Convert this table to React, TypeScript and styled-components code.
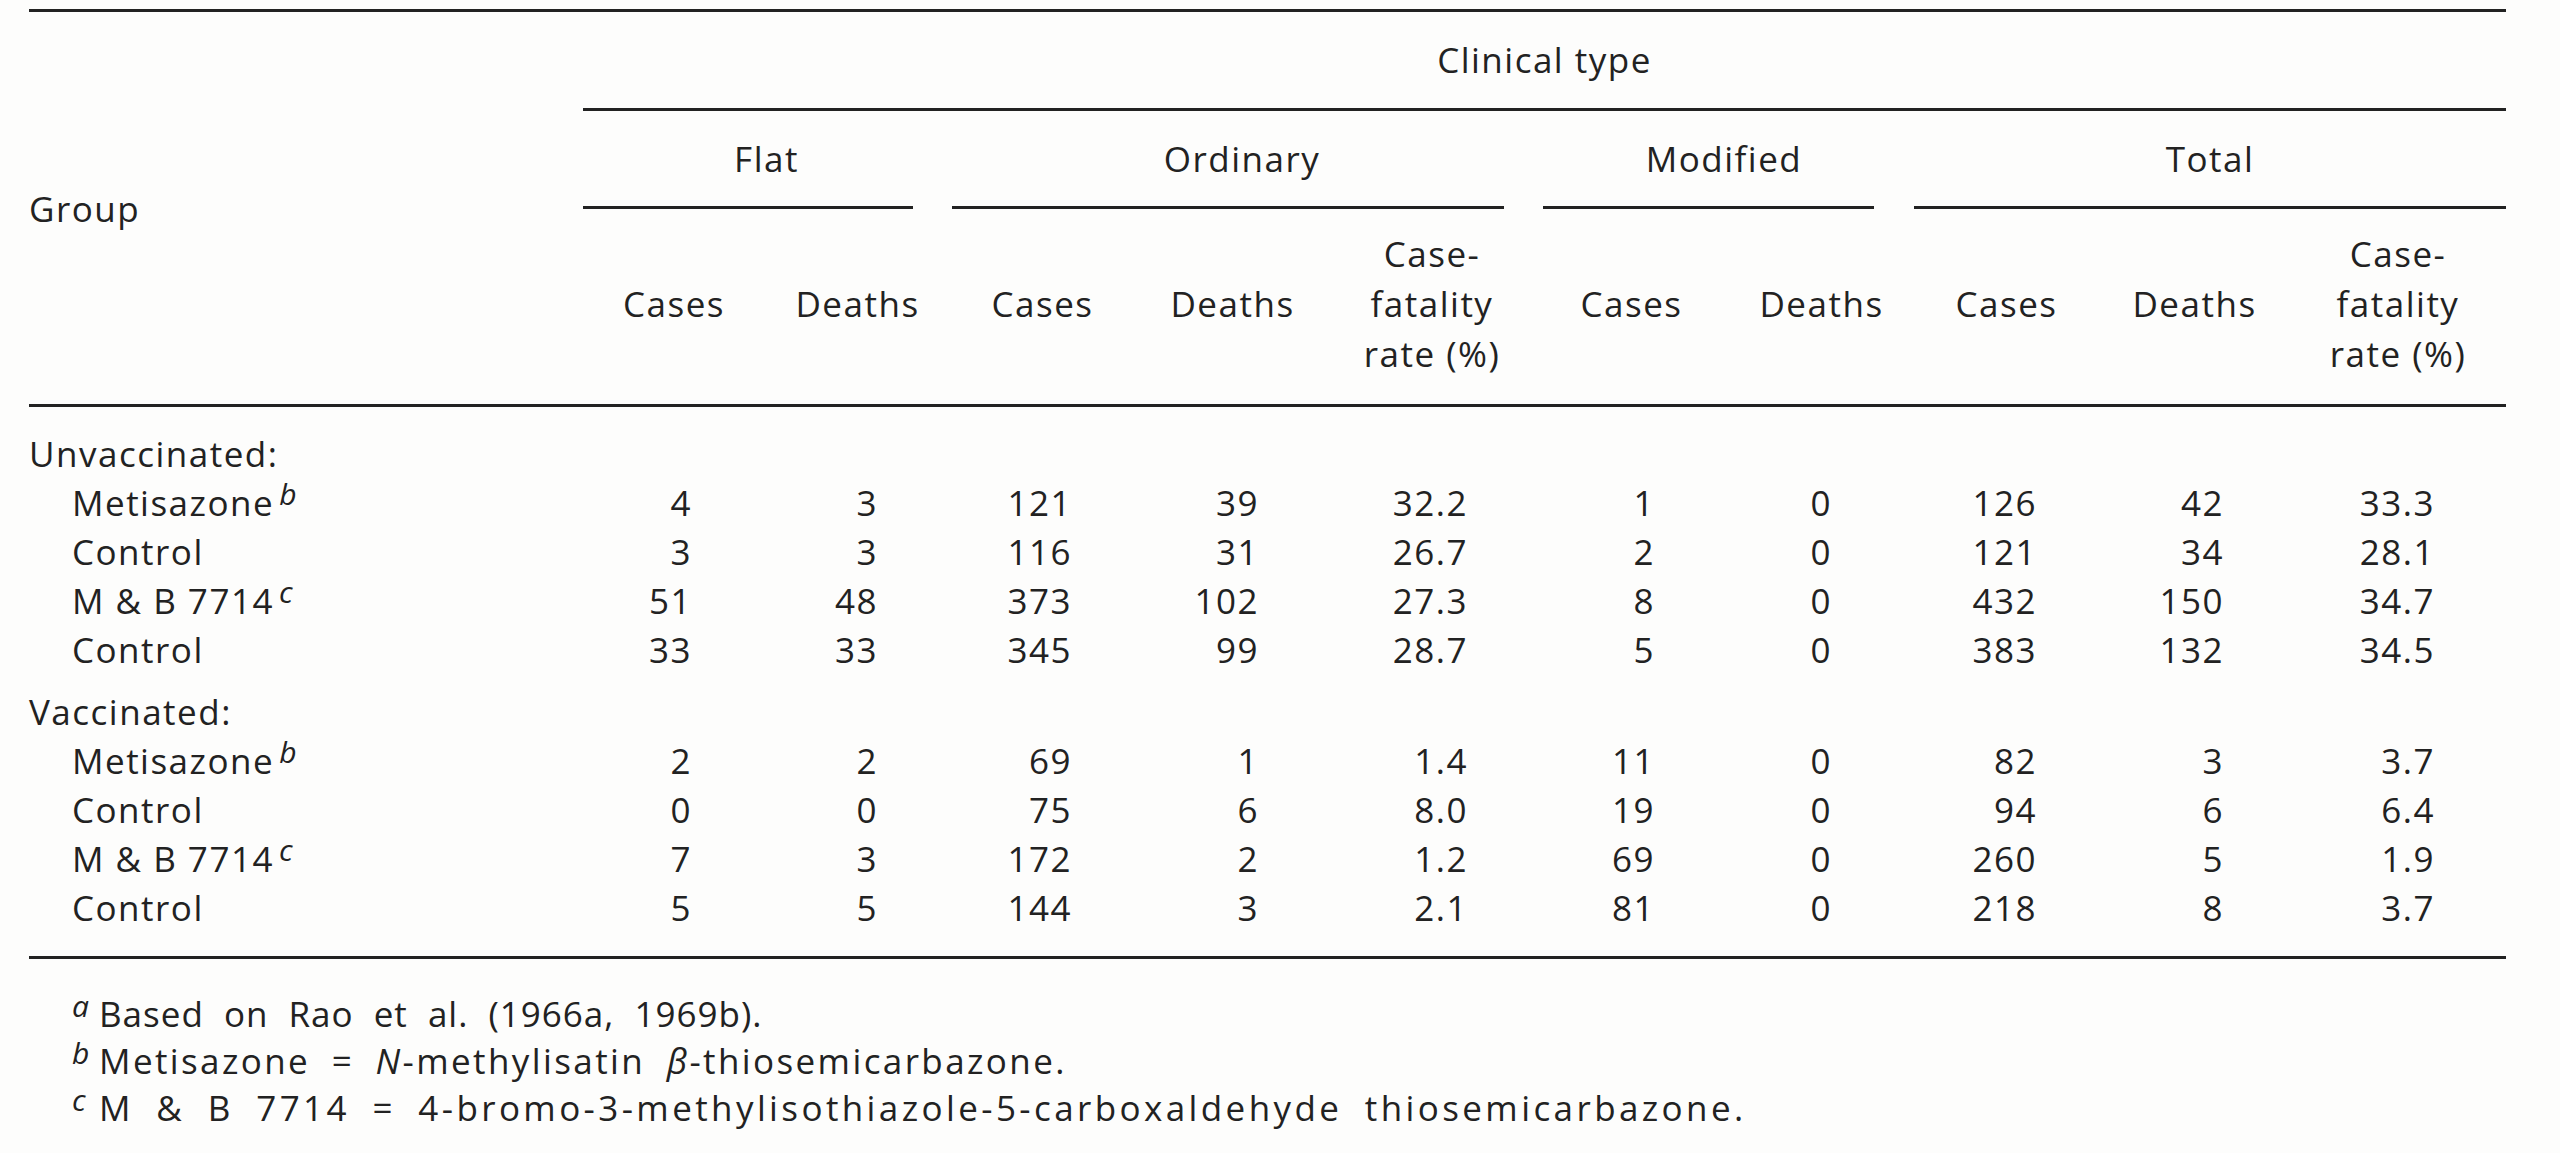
import styled, { createGlobalStyle } from 'styled-components';

const GlobalStyle = createGlobalStyle`
  html, body {
    margin: 0;
    padding: 0;
    background: #fdfdfc;
  }
  body {
    font-family: 'Open Sans', 'DejaVu Sans', sans-serif;
    font-weight: 500;
    color: #222;
  }
`;

// column widths taken from the scan: group label + 10 data columns
const GRID = '554px 182px 185px 185px 195px 204px 195px 185px 185px 191px 216px';

// right padding for each data column so the figures line up as in the scan
const PADS = [73, 72, 63, 71, 66, 74, 82, 62, 66, 71];

type Row = { label: string; mark?: string; values: string[] };
type Section = { title: string; rows: Row[] };

const sections: Section[] = [
  {
    title: 'Unvaccinated:',
    rows: [
      { label: 'Metisazone', mark: 'b', values: ['4', '3', '121', '39', '32.2', '1', '0', '126', '42', '33.3'] },
      { label: 'Control', values: ['3', '3', '116', '31', '26.7', '2', '0', '121', '34', '28.1'] },
      { label: 'M & B 7714', mark: 'c', values: ['51', '48', '373', '102', '27.3', '8', '0', '432', '150', '34.7'] },
      { label: 'Control', values: ['33', '33', '345', '99', '28.7', '5', '0', '383', '132', '34.5'] },
    ],
  },
  {
    title: 'Vaccinated:',
    rows: [
      { label: 'Metisazone', mark: 'b', values: ['2', '2', '69', '1', '1.4', '11', '0', '82', '3', '3.7'] },
      { label: 'Control', values: ['0', '0', '75', '6', '8.0', '19', '0', '94', '6', '6.4'] },
      { label: 'M & B 7714', mark: 'c', values: ['7', '3', '172', '2', '1.2', '69', '0', '260', '5', '1.9'] },
      { label: 'Control', values: ['5', '5', '144', '3', '2.1', '81', '0', '218', '8', '3.7'] },
    ],
  },
];

const groups = [
  { name: 'Flat', span: '2 / 4', inset: '0 37px 0 0' },
  { name: 'Ordinary', span: '4 / 7', inset: '0 30px 0 2px' },
  { name: 'Modified', span: '7 / 9', inset: '0 40px 0 9px' },
  { name: 'Total', span: '9 / 12', inset: '0' },
];

const colHeads = [
  ['Cases'],
  ['Deaths'],
  ['Cases'],
  ['Deaths'],
  ['Case-', 'fatality', 'rate (%)'],
  ['Cases'],
  ['Deaths'],
  ['Cases'],
  ['Deaths'],
  ['Case-', 'fatality', 'rate (%)'],
];

export default function App() {
  return (
    <>
      <GlobalStyle />
      <Page>
        <Table>
          <Head>
            <GroupLabel>Group</GroupLabel>
            <TopHead>Clinical type</TopHead>
            {groups.map((g) => (
              <SubHead key={g.name} $span={g.span}>
                <SubLabel>{g.name}</SubLabel>
                <Rule $inset={g.inset} />
              </SubHead>
            ))}
            {colHeads.map((lines, i) => (
              <ColHead key={i}>
                <span>
                  {lines.map((l, j) => (
                    <span key={j}>
                      {l}
                      {j < lines.length - 1 && <br />}
                    </span>
                  ))}
                </span>
              </ColHead>
            ))}
          </Head>
          <Body>
            {sections.map((s) => (
              <SectionBlock key={s.title}>
                <SectionTitle>{s.title}</SectionTitle>
                {s.rows.map((r, i) => (
                  <DataRow key={i}>
                    <RowLabel>
                      {r.label}
                      {r.mark && <Sup>{r.mark}</Sup>}
                    </RowLabel>
                    {r.values.map((v, j) => (
                      <Num key={j} $pad={PADS[j]}>
                        {v}
                      </Num>
                    ))}
                  </DataRow>
                ))}
              </SectionBlock>
            ))}
          </Body>
        </Table>
        <Notes>
          <Note $track={1}>
            <NoteMark>a</NoteMark>Based on Rao et al. (1966a, 1969b).
          </Note>
          <Note $track={2.4}>
            <NoteMark>b</NoteMark>Metisazone = <Ital>N</Ital>-methylisatin <Ital>β</Ital>-thiosemicarbazone.
          </Note>
          <Note $track={3.4}>
            <NoteMark>c</NoteMark>M &amp; B 7714 = 4-bromo-3-methylisothiazole-5-carboxaldehyde thiosemicarbazone.
          </Note>
        </Notes>
      </Page>
    </>
  );
}

const Page = styled.div`
  padding: 9px 0 0 29px;
  width: 2477px;
  font-size: 35px;
  letter-spacing: 1.5px;
`;

const Table = styled.div`
  width: 100%;
`;

const Head = styled.div`
  display: grid;
  grid-template-columns: ${GRID};
  border-top: 3px solid #222;
  border-bottom: 3px solid #222;
`;

const GroupLabel = styled.div`
  grid-column: 1;
  grid-row: 1 / 4;
  display: flex;
  align-items: center;
  line-height: 49px;
`;

const TopHead = styled.div`
  grid-column: 2 / 12;
  grid-row: 1;
  text-align: center;
  line-height: 49px;
  padding: 23px 0 24px;
  border-bottom: 3px solid #222;
`;

const SubHead = styled.div<{ $span: string }>`
  grid-column: ${(p) => p.$span};
  grid-row: 2;
  display: flex;
  flex-direction: column;
`;

const SubLabel = styled.div`
  text-align: center;
  line-height: 49px;
  padding: 23px 0;
`;

const Rule = styled.div<{ $inset: string }>`
  height: 3px;
  background: #222;
  margin: ${(p) => p.$inset};
`;

const ColHead = styled.div`
  grid-row: 3;
  display: flex;
  align-items: center;
  justify-content: center;
  text-align: center;
  line-height: 50px;
  padding: 20px 0 25px;
  min-height: 150px;
`;

const Body = styled.div`
  padding: 22px 0 24px;
  border-bottom: 3px solid #222;
`;

const SectionBlock = styled.div`
  & + & {
    margin-top: 13px;
  }
`;

const SectionTitle = styled.div`
  line-height: 49px;
`;

const DataRow = styled.div`
  display: grid;
  grid-template-columns: ${GRID};
  line-height: 49px;
`;

const RowLabel = styled.div`
  padding-left: 43px;
  white-space: nowrap;
`;

const Sup = styled.span`
  font-style: italic;
  font-size: 30px;
  line-height: 0;
  vertical-align: 11px;
  margin-left: 5px;
  letter-spacing: 0;
`;

const Num = styled.div<{ $pad: number }>`
  text-align: right;
  padding-right: ${(p) => p.$pad}px;
`;

const Notes = styled.div`
  padding: 31px 0 0 43px;
`;

const Note = styled.div<{ $track: number }>`
  line-height: 47px;
  letter-spacing: ${(p) => p.$track}px;
  word-spacing: 10px;
  white-space: nowrap;
`;

const NoteMark = styled.span`
  display: inline-block;
  width: 27px;
  font-style: italic;
  font-size: 30px;
  line-height: 0;
  vertical-align: 10px;
  letter-spacing: 0;
`;

const Ital = styled.span`
  font-style: italic;
`;
